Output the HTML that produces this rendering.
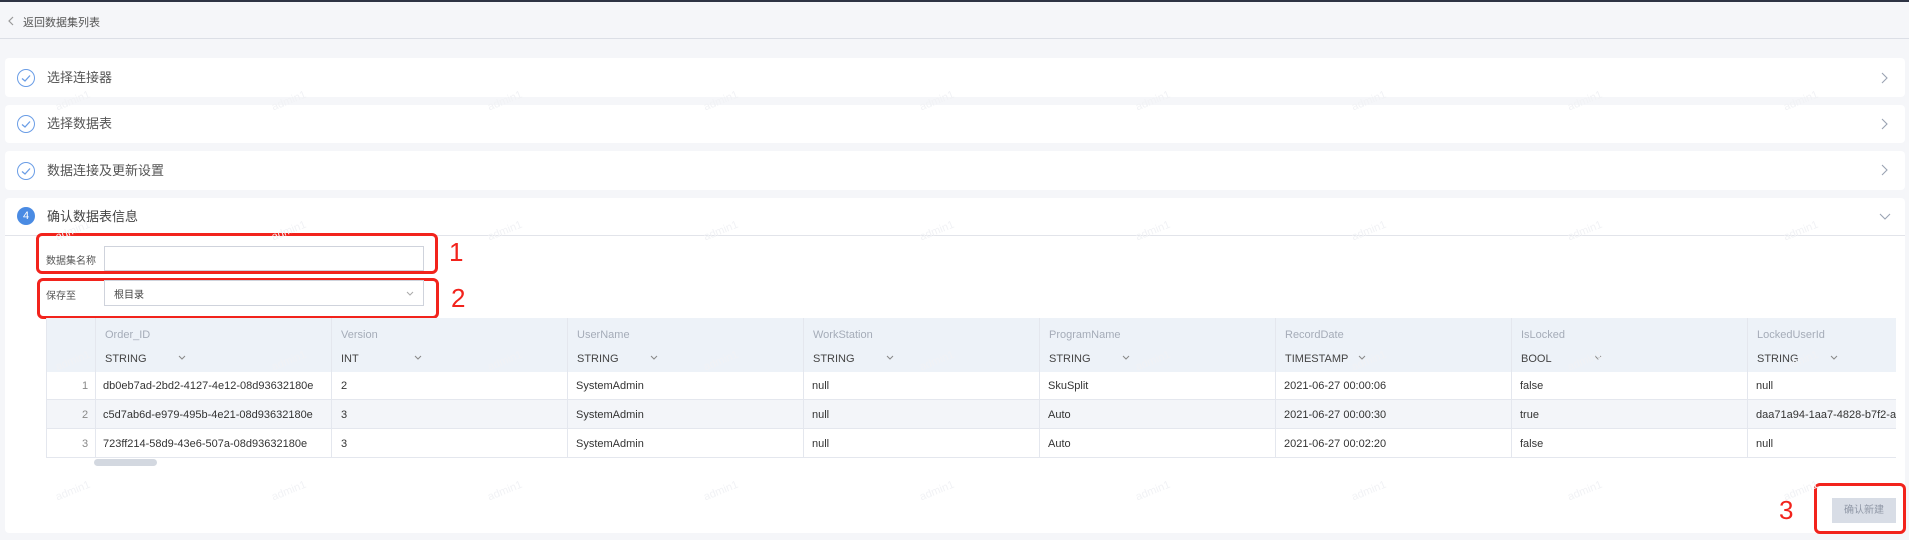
<!DOCTYPE html>
<html><head><meta charset="utf-8"><style>
*{box-sizing:border-box;margin:0;padding:0}
body{width:1909px;height:540px;overflow:hidden;background:#f5f6f9;font-family:"Liberation Sans","Noto Sans CJK SC",sans-serif;position:relative;color:#333}
.abs{position:absolute}
.topbar{left:0;top:0;width:1909px;height:2px;background:#2e3444}
.hdr{left:0;top:2px;width:1909px;height:37px;border-bottom:1px solid #dcdfe6;background:#f5f6f9}
.card{background:#fff;border-radius:4px;left:5px;width:1900px}
.sec{font-size:13px;color:#555;line-height:16px}
.ck{width:18px;height:18px;border:1.3px solid #6a9de6;border-radius:50%}
.red{border:3px solid #f2231c;border-radius:6px}
.num{color:#f2231c;font-size:26px;line-height:26px;font-family:"Liberation Sans",sans-serif}
.cell{position:absolute;font-size:11px;line-height:14px;color:#333;white-space:nowrap}
.hn{color:#a5acb8}
.ht{color:#444}
.wm{position:absolute;font-size:11px;color:#f1f2f5;transform:rotate(-22deg);pointer-events:none}
</style></head><body>
<div class="abs topbar"></div>
<div class="abs hdr"></div>
<svg class="abs" style="left:7px;top:16px" width="8" height="10"><path d="M6 1 L2 5 L6 9" stroke="#999" stroke-width="1.2" fill="none"/></svg>
<div class="abs" style="left:23px;top:14px;font-size:11px;color:#555">返回数据集列表</div>

<div class="abs card" style="top:58px;height:39px"></div>
<div class="abs card" style="top:105px;height:38px"></div>
<div class="abs card" style="top:151px;height:39px"></div>
<div class="abs card" style="top:198px;height:335px"></div>

<div class="abs ck" style="left:17px;top:69px"></div>
<svg class="abs" style="left:17px;top:69px" width="18" height="18"><path d="M5 9.5 L8 12 L13 6.5" stroke="#6a9de6" stroke-width="1.3" fill="none"/></svg>
<div class="abs sec" style="left:47px;top:70px">选择连接器</div>
<div class="abs ck" style="left:17px;top:115px"></div>
<svg class="abs" style="left:17px;top:115px" width="18" height="18"><path d="M5 9.5 L8 12 L13 6.5" stroke="#6a9de6" stroke-width="1.3" fill="none"/></svg>
<div class="abs sec" style="left:47px;top:116px">选择数据表</div>
<div class="abs ck" style="left:17px;top:162px"></div>
<svg class="abs" style="left:17px;top:162px" width="18" height="18"><path d="M5 9.5 L8 12 L13 6.5" stroke="#6a9de6" stroke-width="1.3" fill="none"/></svg>
<div class="abs sec" style="left:47px;top:163px">数据连接及更新设置</div>
<div class="abs" style="left:17px;top:207px;width:18px;height:18px;border-radius:50%;background:#4a8be3;color:#fff;font-size:11px;text-align:center;line-height:18px">4</div>
<div class="abs sec" style="left:47px;top:209px;color:#444">确认数据表信息</div>
<svg class="abs" style="left:1881px;top:72px" width="8" height="12"><path d="M1 1 L6 6 L1 11" stroke="#9aa3b3" stroke-width="1.1" fill="none"/></svg>
<svg class="abs" style="left:1881px;top:118px" width="8" height="12"><path d="M1 1 L6 6 L1 11" stroke="#9aa3b3" stroke-width="1.1" fill="none"/></svg>
<svg class="abs" style="left:1881px;top:164px" width="8" height="12"><path d="M1 1 L6 6 L1 11" stroke="#9aa3b3" stroke-width="1.1" fill="none"/></svg>
<svg class="abs" style="left:1879px;top:213px" width="12" height="8"><path d="M1 1 L6 6 L11 1" stroke="#9aa3b3" stroke-width="1.1" fill="none"/></svg>
<div class="abs" style="left:5px;top:235px;width:1900px;height:1px;background:#e2e4ea"></div>

<div class="abs red" style="left:36px;top:233px;width:402px;height:41px"></div>
<div class="abs" style="left:46px;top:252px;font-size:10px;color:#555">数据集名称</div>
<div class="abs" style="left:104px;top:246px;width:320px;height:25px;border:1px solid #cfd3dc;background:#fff"></div>
<div class="abs num" style="left:449px;top:239px">1</div>
<div class="abs red" style="left:37px;top:278px;width:402px;height:41px"></div>
<div class="abs" style="left:46px;top:287px;font-size:10px;color:#555">保存至</div>
<div class="abs" style="left:104px;top:280px;width:320px;height:26px;border:1px solid #cfd3dc;background:#fff"></div>
<div class="abs" style="left:114px;top:286px;font-size:10px;color:#444">根目录</div>
<svg class="abs" style="left:406px;top:291px" width="8" height="5"><path d="M1 1 L4 4 L7 1" stroke="#aaa" stroke-width="1" fill="none"/></svg>
<div class="abs num" style="left:451px;top:285px">2</div>

<div class="abs" style="left:46px;top:318px;width:1850px;height:54px;background:#edf2f8"></div>
<div class="abs" style="left:46px;top:372px;width:1850px;height:28px;background:#fff;border-bottom:1px solid #e4e7ee"></div>
<div class="abs" style="left:46px;top:400px;width:1850px;height:29px;background:#f3f5f9;border-bottom:1px solid #e4e7ee"></div>
<div class="abs" style="left:46px;top:429px;width:1850px;height:29px;background:#fff;border-bottom:1px solid #e4e7ee"></div>
<div class="abs" style="left:46px;top:318px;width:1px;height:140px;background:#e4e7ee"></div>
<div class="abs" style="left:95px;top:318px;width:1px;height:140px;background:#e4e7ee"></div>
<div class="abs" style="left:331px;top:318px;width:1px;height:140px;background:#e4e7ee"></div>
<div class="abs" style="left:567px;top:318px;width:1px;height:140px;background:#e4e7ee"></div>
<div class="abs" style="left:803px;top:318px;width:1px;height:140px;background:#e4e7ee"></div>
<div class="abs" style="left:1039px;top:318px;width:1px;height:140px;background:#e4e7ee"></div>
<div class="abs" style="left:1275px;top:318px;width:1px;height:140px;background:#e4e7ee"></div>
<div class="abs" style="left:1511px;top:318px;width:1px;height:140px;background:#e4e7ee"></div>
<div class="abs" style="left:1747px;top:318px;width:1px;height:140px;background:#e4e7ee"></div>
<div class="abs" style="left:94px;top:459px;width:63px;height:7px;border-radius:4px;background:#d3d8e0"></div>

<div class="cell" style="left:82px;top:379px;color:#888">1</div>
<div class="cell" style="left:82px;top:408px;color:#888">2</div>
<div class="cell" style="left:82px;top:437px;color:#888">3</div>

<div class="cell hn" style="left:105px;top:328px">Order_ID</div><div class="cell ht" style="left:105px;top:352px">STRING</div>
<div class="cell hn" style="left:341px;top:328px">Version</div><div class="cell ht" style="left:341px;top:352px">INT</div>
<div class="cell hn" style="left:577px;top:328px">UserName</div><div class="cell ht" style="left:577px;top:352px">STRING</div>
<div class="cell hn" style="left:813px;top:328px">WorkStation</div><div class="cell ht" style="left:813px;top:352px">STRING</div>
<div class="cell hn" style="left:1049px;top:328px">ProgramName</div><div class="cell ht" style="left:1049px;top:352px">STRING</div>
<div class="cell hn" style="left:1285px;top:328px">RecordDate</div><div class="cell ht" style="left:1285px;top:352px">TIMESTAMP</div>
<div class="cell hn" style="left:1521px;top:328px">IsLocked</div><div class="cell ht" style="left:1521px;top:352px">BOOL</div>
<div class="cell hn" style="left:1757px;top:328px">LockedUserId</div><div class="cell ht" style="left:1757px;top:352px">STRING</div>
<svg class="abs" style="left:0;top:0" width="1909" height="540">
<g stroke="#888" stroke-width="1" fill="none">
<path d="M179 356 L182 359 L185 356"/><path d="M415 356 L418 359 L421 356"/><path d="M651 356 L654 359 L657 356"/><path d="M887 356 L890 359 L893 356"/><path d="M1123 356 L1126 359 L1129 356"/><path d="M1359 356 L1362 359 L1365 356"/><path d="M1595 356 L1598 359 L1601 356"/><path d="M1831 356 L1834 359 L1837 356"/>
</g></svg>

<div class="cell" style="left:103px;top:379px">db0eb7ad-2bd2-4127-4e12-08d93632180e</div>
<div class="cell" style="left:341px;top:379px">2</div>
<div class="cell" style="left:576px;top:379px">SystemAdmin</div>
<div class="cell" style="left:812px;top:379px">null</div>
<div class="cell" style="left:1048px;top:379px">SkuSplit</div>
<div class="cell" style="left:1284px;top:379px">2021-06-27 00:00:06</div>
<div class="cell" style="left:1520px;top:379px">false</div>
<div class="cell" style="left:1756px;top:379px">null</div>

<div class="cell" style="left:103px;top:408px">c5d7ab6d-e979-495b-4e21-08d93632180e</div>
<div class="cell" style="left:341px;top:408px">3</div>
<div class="cell" style="left:576px;top:408px">SystemAdmin</div>
<div class="cell" style="left:812px;top:408px">null</div>
<div class="cell" style="left:1048px;top:408px">Auto</div>
<div class="cell" style="left:1284px;top:408px">2021-06-27 00:00:30</div>
<div class="cell" style="left:1520px;top:408px">true</div>
<div class="cell" style="left:1756px;top:408px;width:140px;overflow:hidden">daa71a94-1aa7-4828-b7f2-ac7</div>

<div class="cell" style="left:103px;top:437px">723ff214-58d9-43e6-507a-08d93632180e</div>
<div class="cell" style="left:341px;top:437px">3</div>
<div class="cell" style="left:576px;top:437px">SystemAdmin</div>
<div class="cell" style="left:812px;top:437px">null</div>
<div class="cell" style="left:1048px;top:437px">Auto</div>
<div class="cell" style="left:1284px;top:437px">2021-06-27 00:02:20</div>
<div class="cell" style="left:1520px;top:437px">false</div>
<div class="cell" style="left:1756px;top:437px">null</div>

<div class="abs" style="left:1832px;top:498px;width:64px;height:25px;background:#d8dde6;color:#8f97a6;font-size:10px;text-align:center;line-height:25px">确认新建</div>
<div class="abs red" style="left:1814px;top:483px;width:92px;height:51px"></div>
<div class="abs num" style="left:1779px;top:497px">3</div>

<div class="wm" style="left:55px;top:95px">admin1</div><div class="wm" style="left:271px;top:95px">admin1</div><div class="wm" style="left:487px;top:95px">admin1</div><div class="wm" style="left:703px;top:95px">admin1</div><div class="wm" style="left:919px;top:95px">admin1</div><div class="wm" style="left:1135px;top:95px">admin1</div><div class="wm" style="left:1351px;top:95px">admin1</div><div class="wm" style="left:1567px;top:95px">admin1</div><div class="wm" style="left:1783px;top:95px">admin1</div>
<div class="wm" style="left:55px;top:225px">admin1</div><div class="wm" style="left:271px;top:225px">admin1</div><div class="wm" style="left:487px;top:225px">admin1</div><div class="wm" style="left:703px;top:225px">admin1</div><div class="wm" style="left:919px;top:225px">admin1</div><div class="wm" style="left:1135px;top:225px">admin1</div><div class="wm" style="left:1351px;top:225px">admin1</div><div class="wm" style="left:1567px;top:225px">admin1</div><div class="wm" style="left:1783px;top:225px">admin1</div>
<div class="wm" style="left:55px;top:355px">admin1</div><div class="wm" style="left:271px;top:355px">admin1</div><div class="wm" style="left:487px;top:355px">admin1</div><div class="wm" style="left:703px;top:355px">admin1</div><div class="wm" style="left:919px;top:355px">admin1</div><div class="wm" style="left:1135px;top:355px">admin1</div><div class="wm" style="left:1351px;top:355px">admin1</div><div class="wm" style="left:1567px;top:355px">admin1</div><div class="wm" style="left:1783px;top:355px">admin1</div>
<div class="wm" style="left:55px;top:485px">admin1</div><div class="wm" style="left:271px;top:485px">admin1</div><div class="wm" style="left:487px;top:485px">admin1</div><div class="wm" style="left:703px;top:485px">admin1</div><div class="wm" style="left:919px;top:485px">admin1</div><div class="wm" style="left:1135px;top:485px">admin1</div><div class="wm" style="left:1351px;top:485px">admin1</div><div class="wm" style="left:1567px;top:485px">admin1</div><div class="wm" style="left:1783px;top:485px">admin1</div>
</body></html>
